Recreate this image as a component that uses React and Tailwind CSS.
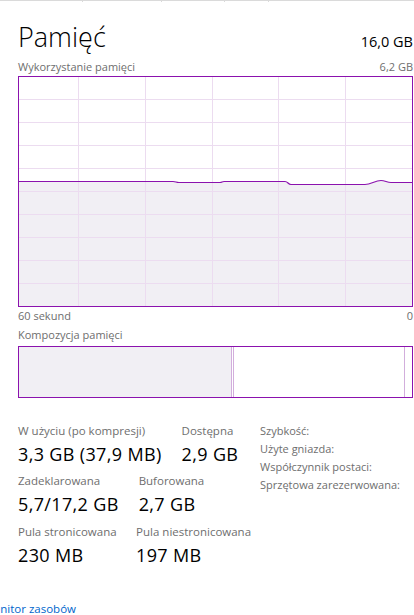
import React from "react";

const linePath =
  "M0,104.5 L154,104.5 C157,104.5 157,105.5 160,105.5 L201,105.5 C203,105.5 203,104.5 205,104.5 L266,104.5 C269,104.5 269,107.5 272,107.5 L346,107.5 C352,107.5 356,103.5 362,103.5 C366,103.5 368,105.5 372,105.5 L393,105.5";

const UsageGraph = () => {
  const vx = [59, 126, 193, 259, 326];
  const hy = [22, 45, 68, 91, 114, 137, 160, 183, 206];
  return (
    <div className="h-[231px] border border-[#8b12ae] bg-white">
      <svg width="393" height="229" viewBox="0 0 393 229" className="block">
        <path d={linePath + " L393,229 L0,229 Z"} fill="#f1eff4" />
        <g stroke="#ecdcf0" strokeWidth="1" shapeRendering="crispEdges">
          {vx.map((x) => (
            <line key={"v" + x} x1={x + 0.5} y1="0" x2={x + 0.5} y2="229" />
          ))}
          {hy.map((y) => (
            <line key={"h" + y} x1="0" y1={y + 0.5} x2="393" y2={y + 0.5} />
          ))}
        </g>
        <path d={linePath} fill="none" stroke="#8b12ae" strokeWidth="1.2" />
      </svg>
    </div>
  );
};

const Stat = ({ label, value }) => (
  <div className="flex flex-col">
    <span className="text-[11.5px] leading-[14px] text-[#6e6e6e] whitespace-nowrap">{label}</span>
    <span className="mt-[5px] text-[18px] leading-[22px] tracking-[0.35px] text-black whitespace-nowrap">{value}</span>
  </div>
);

const App = () => {
  return (
    <div className="relative w-[414px] h-[615px] overflow-hidden bg-white font-['Open_Sans',sans-serif]">
      <div className="flex h-[2px] border-t border-[#dadada]">
        <div className="w-[83px] border-r border-[#dadada]" />
        <div className="w-[79px] border-r border-[#dadada]" />
        <div className="w-[63px] border-r border-[#dadada]" />
        <div className="w-[44px] border-r border-[#dadada]" />
      </div>

      <div className="pl-[18px] pr-[1px]">
        <div className="mt-[18.5px] flex items-baseline justify-between">
          <h1 className="text-[27px] leading-[32px] font-light text-black">Pamięć</h1>
          <span className="text-[14.5px] leading-[20px] text-black">16,0 GB</span>
        </div>

        <div className="mt-[7px] flex justify-between text-[11px] leading-[14px] text-[#6e6e6e]">
          <span>Wykorzystanie pamięci</span>
          <span>6,2 GB</span>
        </div>

        <div className="mt-[2.5px]">
          <UsageGraph />
        </div>

        <div className="mt-[1.5px] flex justify-between text-[11px] leading-[14px] text-[#6e6e6e]">
          <span>60 sekund</span>
          <span>0</span>
        </div>

        <div className="mt-[5.5px] text-[11px] leading-[14px] text-[#6e6e6e]">Kompozycja pamięci</div>

        <div className="mt-[4px] flex h-[52px] border border-[#8b12ae] bg-white">
          <div className="w-[213px] bg-[#f1eff4] border-r border-[#d2aedc]" />
          <div className="w-px bg-white" />
          <div className="w-px bg-[#d2aedc]" />
          <div className="flex-1 border-r border-[#d2aedc]" />
          <div className="w-[7px]" />
        </div>

        <div className="mt-[25.5px] flex items-start">
          <div className="flex flex-col">
            <div className="flex gap-[20px]">
              <Stat label="W użyciu (po kompresji)" value="3,3 GB (37,9 MB)" />
              <Stat label="Dostępna" value="2,9 GB" />
            </div>
            <div className="mt-[9px] flex gap-[20px]">
              <Stat label="Zadeklarowana" value="5,7/17,2 GB" />
              <Stat label="Buforowana" value="2,7 GB" />
            </div>
            <div className="mt-[10px] flex gap-[19.5px]">
              <Stat label="Pula stronicowana" value="230 MB" />
              <Stat label="Pula niestronicowana" value="197 MB" />
            </div>
          </div>
          <div className="ml-auto mr-[3px] -mt-[2px] flex flex-col text-[11px] leading-[18px] text-[#6e6e6e] w-[150px]">
            <span>Szybkość:</span>
            <span>Użyte gniazda:</span>
            <span>Współczynnik postaci:</span>
            <span>Sprzętowa zarezerwowana:</span>
          </div>
        </div>
      </div>

      <div className="mt-[35px] ml-[-17px] text-[11.5px] leading-[16px] text-[#0066cc] whitespace-nowrap">
        Monitor zasobów
      </div>
    </div>
  );
};

export default App;
